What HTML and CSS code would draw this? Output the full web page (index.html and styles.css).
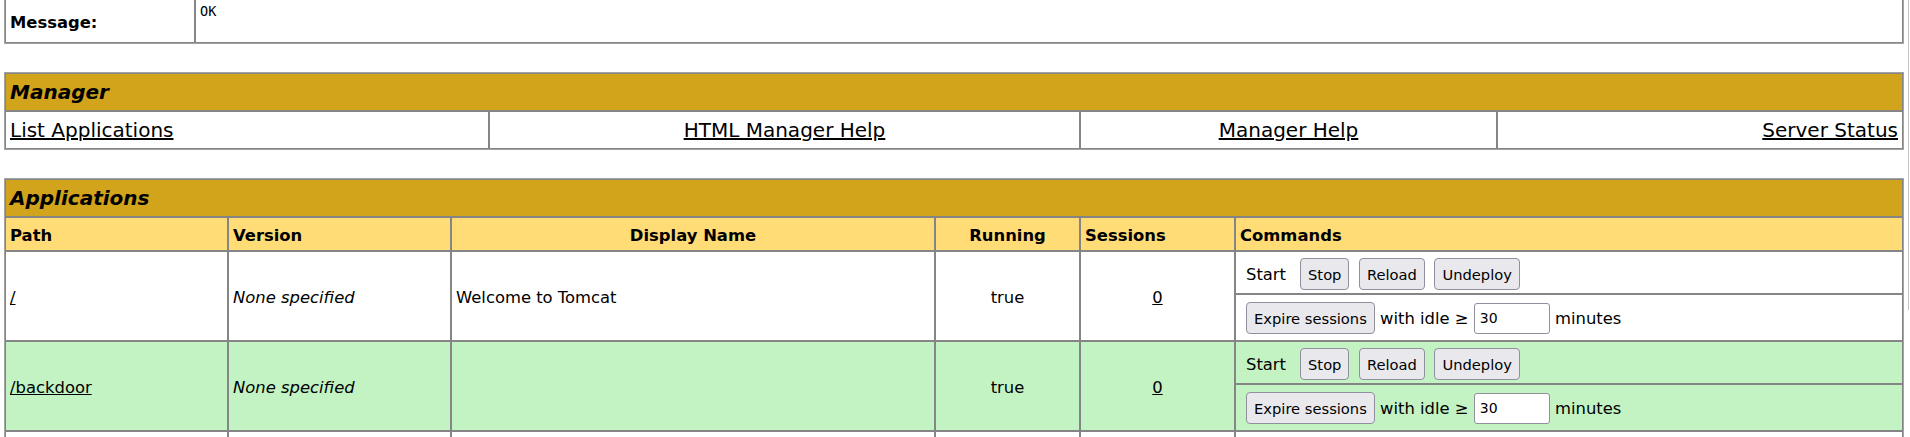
FILE: index.html
```html
<!DOCTYPE html>
<html lang="en">
<head>
<meta charset="utf-8">
<title>/manager</title>
<link rel="stylesheet" href="styles.css">
</head>
<body>
<table class="grid msg">
  <colgroup><col class="c-msg"><col></colgroup>
  <tr>
    <td class="row-left"><small><strong>Message:</strong></small></td>
    <td class="row-left"><pre>OK</pre></td>
  </tr>
</table>

<table class="grid mgr">
  <colgroup><col class="c-m1"><col class="c-m2"><col class="c-m3"><col></colgroup>
  <tr><td colspan="4" class="title">Manager</td></tr>
  <tr>
    <td class="row-left"><a href="#">List Applications</a></td>
    <td class="row-center"><a href="#">HTML Manager Help</a></td>
    <td class="row-center"><a href="#">Manager Help</a></td>
    <td class="row-right"><a href="#">Server Status</a></td>
  </tr>
</table>

<table class="grid apps">
  <colgroup><col class="c-a1"><col class="c-a2"><col class="c-a3"><col class="c-a4"><col class="c-a5"><col></colgroup>
  <tr><td colspan="6" class="title">Applications</td></tr>
  <tr>
    <td class="header-left"><small>Path</small></td>
    <td class="header-left"><small>Version</small></td>
    <td class="header-center"><small>Display Name</small></td>
    <td class="header-center"><small>Running</small></td>
    <td class="header-left"><small>Sessions</small></td>
    <td class="header-left"><small>Commands</small></td>
  </tr>

  <tr class="row-white">
    <td class="row-left" rowspan="2"><small><a href="#">/</a></small></td>
    <td class="row-left" rowspan="2"><small><i>None specified</i></small></td>
    <td class="row-left" rowspan="2"><small>Welcome to Tomcat</small></td>
    <td class="row-center" rowspan="2"><small>true</small></td>
    <td class="row-center" rowspan="2"><small><a href="#">0</a></small></td>
    <td class="cmd">
      <div class="cmdbar">
        <span class="lbl">Start</span>
        <button class="btn" type="button">Stop</button>
        <button class="btn" type="button">Reload</button>
        <button class="btn" type="button">Undeploy</button>
      </div>
    </td>
  </tr>
  <tr class="row-white">
    <td class="cmd2">
      <div class="cmdbar">
        <button class="btn btn-exp" type="button">Expire sessions</button>
        <span class="txt">&nbsp;with idle &ge;&nbsp;</span>
        <input class="idle" type="text" value="30">
        <span class="txt">&nbsp;minutes</span>
      </div>
    </td>
  </tr>

  <tr class="row-green">
    <td class="row-left" rowspan="2"><small><a href="#">/backdoor</a></small></td>
    <td class="row-left" rowspan="2"><small><i>None specified</i></small></td>
    <td class="row-left" rowspan="2"><small></small></td>
    <td class="row-center" rowspan="2"><small>true</small></td>
    <td class="row-center" rowspan="2"><small><a href="#">0</a></small></td>
    <td class="cmd">
      <div class="cmdbar">
        <span class="lbl">Start</span>
        <button class="btn" type="button">Stop</button>
        <button class="btn" type="button">Reload</button>
        <button class="btn" type="button">Undeploy</button>
      </div>
    </td>
  </tr>
  <tr class="row-green">
    <td class="cmd2">
      <div class="cmdbar">
        <button class="btn btn-exp" type="button">Expire sessions</button>
        <span class="txt">&nbsp;with idle &ge;&nbsp;</span>
        <input class="idle" type="text" value="30">
        <span class="txt">&nbsp;minutes</span>
      </div>
    </td>
  </tr>

  <tr class="row-white">
    <td class="row-left" rowspan="2"><small><a href="#">/docs</a></small></td>
    <td class="row-left" rowspan="2"><small><i>None specified</i></small></td>
    <td class="row-left" rowspan="2"><small>Tomcat Documentation</small></td>
    <td class="row-center" rowspan="2"><small>true</small></td>
    <td class="row-center" rowspan="2"><small><a href="#">0</a></small></td>
    <td class="cmd">
      <div class="cmdbar">
        <span class="lbl">Start</span>
        <button class="btn" type="button">Stop</button>
        <button class="btn" type="button">Reload</button>
        <button class="btn" type="button">Undeploy</button>
      </div>
    </td>
  </tr>
  <tr class="row-white">
    <td class="cmd2">
      <div class="cmdbar">
        <button class="btn btn-exp" type="button">Expire sessions</button>
        <span class="txt">&nbsp;with idle &ge;&nbsp;</span>
        <input class="idle" type="text" value="30">
        <span class="txt">&nbsp;minutes</span>
      </div>
    </td>
  </tr>
</table>

<div class="thumb"></div>
</body>
</html>
```

FILE: styles.css
```css
html {
  overflow: hidden;
}

body {
  margin: 0 6px 0 4px;
  background: #ffffff;
  color: #000000;
  font-family: "DejaVu Sans", "Liberation Sans", sans-serif;
  font-size: 20px;
}

small {
  font-size: 16.4px;
}

a {
  color: #000000;
  text-decoration: underline;
}

.grid {
  width: 100%;
  table-layout: fixed;
  border-collapse: separate;
  border-spacing: 0;
  border: 1px solid #a3a3a3;
}

.grid td {
  border: 1px solid #858585;
  padding: 6px 4px;
  font-size: 20px;
  line-height: normal;
  vertical-align: middle;
  text-align: left;
}

/* message box (top is scrolled off) */
.msg {
  border-top: 0;
}

.msg td {
  border-top: 0;
  padding: 3px 4px 4px;
}

.msg pre {
  margin: 0 0 19px;
  font-family: "DejaVu Sans Mono", "Liberation Mono", monospace;
  font-size: 13.5px;
}

.c-msg { width: 190px; }

.mgr { margin-top: 28px; }
.apps { margin-top: 28px; }

.c-m1 { width: 484px; }
.c-m2 { width: 591px; }
.c-m3 { width: 417px; }

.c-a1 { width: 223px; }
.c-a2 { width: 223px; }
.c-a3 { width: 484px; }
.c-a4 { width: 145px; }
.c-a5 { width: 155px; }

.grid td.title {
  background: #d2a41c;
  font-weight: bold;
  font-style: italic;
}

.grid td.header-left,
.grid td.header-center {
  background: #ffdc75;
  font-weight: bold;
  padding-top: 4px;
  padding-bottom: 4px;
}

.grid td.header-center,
.grid td.row-center {
  text-align: center;
}

.grid td.row-right {
  text-align: right;
}

.row-white td { background: #ffffff; }
.row-green td { background: #c3f3c3; }

.grid td.cmd {
  padding: 6px 4px 3px;
}

.grid td.cmd2 {
  padding: 7px 4px 6px;
}

.cmdbar {
  display: flex;
  align-items: center;
  height: 32px;
  font-size: 16.4px;
  white-space: nowrap;
}

.lbl {
  margin: 0 14px 0 6px;
}

.btn {
  box-sizing: border-box;
  height: 32px;
  margin: 0 9.5px 0 0;
  padding: 0 7px;
  border: 1px solid #8f8f9d;
  border-radius: 4px;
  background: #e9e9ed;
  color: #000000;
  font-family: "DejaVu Sans", "Liberation Sans", sans-serif;
  font-size: 14.7px;
}

.btn-exp {
  margin: 0 0 0 6px;
}

.idle {
  box-sizing: border-box;
  width: 76px;
  height: 31px;
  margin: 0;
  padding: 0 5px;
  border: 1px solid #8f8f9d;
  border-radius: 3px;
  background: #ffffff;
  color: #000000;
  font-family: "DejaVu Sans", "Liberation Sans", sans-serif;
  font-size: 14px;
}

.thumb {
  position: fixed;
  top: 0;
  right: 1px;
  width: 1px;
  height: 310px;
  background: #c4c4c4;
}
```
